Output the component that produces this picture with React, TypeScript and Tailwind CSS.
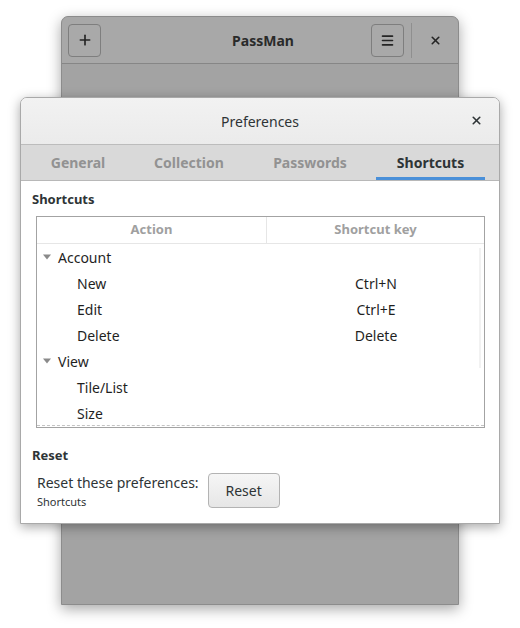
import { Plus, Menu, X } from 'lucide-react'

const font = { fontFamily: '"Noto Sans", "DejaVu Sans", sans-serif' }

const rows = [
  { label: 'Account', key: '', group: true },
  { label: 'New', key: 'Ctrl+N' },
  { label: 'Edit', key: 'Ctrl+E' },
  { label: 'Delete', key: 'Delete' },
  { label: 'View', key: '', group: true },
  { label: 'Tile/List', key: '' },
  { label: 'Size', key: '' },
]

const tabs = [
  { name: 'General', cls: 'ml-[7px] w-[100px]' },
  { name: 'Collection', cls: 'ml-[6px] w-[110px]' },
  { name: 'Passwords', cls: 'ml-[11px] w-[110px]' },
  { name: 'Shortcuts', cls: 'ml-[11px] w-[109px]', active: true },
]

function Triangle() {
  return (
    <svg width="8" height="6" viewBox="0 0 8 6" className="shrink-0">
      <path d="M0 0.5 L8 0.5 L4 5.5 Z" fill="#8a8a8a" />
    </svg>
  )
}

export default function App() {
  return (
    <div className="relative w-[520px] h-[628px] bg-white overflow-hidden" style={font}>
      {/* Main window (dimmed, behind) */}
      <div className="absolute left-[61px] top-[16px] w-[398px] h-[589px] rounded-t-[7px] bg-[#a3a3a3] border border-[#8c8c8c] shadow-[0_4px_14px_rgba(0,0,0,0.35)] flex flex-col">
        <div className="h-[47px] flex items-center pl-[6px] border-b border-[#868686] bg-[#a8a8a8] rounded-t-[7px]">
          <div className="w-[33px] h-[33px] rounded-[4px] border border-[#7e7e7e] bg-[#a9a9a9] flex items-center justify-center">
            <Plus size={16} strokeWidth={2.5} color="#252525" />
          </div>
          <div className="flex-1 text-center text-[14px] font-bold text-[#2a2a2a] pl-[54px]">PassMan</div>
          <div className="w-[33px] h-[33px] rounded-[4px] border border-[#7e7e7e] bg-[#a9a9a9] flex items-center justify-center">
            <Menu size={15} strokeWidth={2.6} color="#252525" />
          </div>
          <div className="w-px h-[35px] bg-[#8f8f8f] ml-[7px]" />
          <div className="w-[46px] flex items-center justify-center">
            <X size={13} strokeWidth={3} color="#252525" />
          </div>
        </div>
      </div>

      {/* Preferences dialog */}
      <div className="absolute left-[20px] top-[97px] w-[480px] h-[427px] rounded-t-[7px] bg-white border border-[#a9a9a9] shadow-[0_3px_12px_rgba(0,0,0,0.35)] flex flex-col overflow-hidden">
        <div className="h-[47px] shrink-0 flex items-center justify-center relative bg-gradient-to-b from-[#f2f2f2] to-[#ebebeb] border-b border-[#bcbcbc]">
          <span className="text-[14px] text-[#2e3436]">Preferences</span>
          <div className="absolute right-[16px] top-[16px]">
            <X size={13} strokeWidth={3} color="#2e3436" />
          </div>
        </div>

        {/* Tabs */}
        <div className="h-[36px] shrink-0 flex bg-[#d9d9d9] border-b border-[#b8b8b8]">
          {tabs.map(t => (
            <div key={t.name} className={`${t.cls} h-full flex items-center justify-center text-[14px] font-bold relative ${t.active ? 'text-[#2e3436]' : 'text-[#929292]'}`}>
              {t.name}
              {t.active && <div className="absolute left-0 right-0 bottom-0 h-[3px] bg-[#4a90d9]" />}
            </div>
          ))}
        </div>

        {/* Content */}
        <div className="flex-1 flex flex-col px-[11px] pt-[10px]">
          <div className="text-[13px] font-bold text-[#2e3436] leading-[17px]">Shortcuts</div>

          <div className="mt-[8px] ml-[4px] w-[449px] h-[212px] border border-[#a3a3a3] flex flex-col relative overflow-hidden">
            <div className="h-[27px] shrink-0 flex border-b border-[#e6e6e6] text-[13px] text-[#a0a0a0] font-bold">
              <div className="w-[230px] flex items-center justify-center border-r border-[#e6e6e6]">Action</div>
              <div className="flex-1 flex items-center justify-center">Shortcut key</div>
            </div>
            {rows.map(r => (
              <div key={r.label} className="h-[26px] shrink-0 flex items-center text-[14px] text-[#1f1f1f]">
                <div className="w-[231px] flex items-center">
                  {r.group ? (
                    <>
                      <span className="ml-[6px] mr-[7px] flex"><Triangle /></span>
                      <span>{r.label}</span>
                    </>
                  ) : (
                    <span className="ml-[40px]">{r.label}</span>
                  )}
                </div>
                <div className="flex-1 text-center">{r.key}</div>
              </div>
            ))}
            <div className="absolute left-0 right-0 bottom-[1px] border-b border-dashed border-[#c4c4c4]" />
            <div className="absolute right-[3px] top-[31px] w-[2px] h-[120px] bg-[#f2f2f2]" />
          </div>

          <div className="mt-[19px] text-[13px] font-bold text-[#2e3436] leading-[17px]">Reset</div>
          <div className="mt-[9px] ml-[5px] flex items-start">
            <div className="flex flex-col">
              <span className="text-[14px] text-[#2e3436] leading-[18px] mt-[1px]">Reset these preferences:</span>
              <span className="text-[11px] text-[#2e3436] leading-[15px] mt-[2px]">Shortcuts</span>
            </div>
            <button className="ml-[9px] w-[72px] h-[35px] rounded-[4px] border border-[#b3b3b3] bg-gradient-to-b from-[#f6f6f6] to-[#e6e6e6] text-[14px] text-[#2e3436]">
              Reset
            </button>
          </div>
        </div>
      </div>
    </div>
  )
}
